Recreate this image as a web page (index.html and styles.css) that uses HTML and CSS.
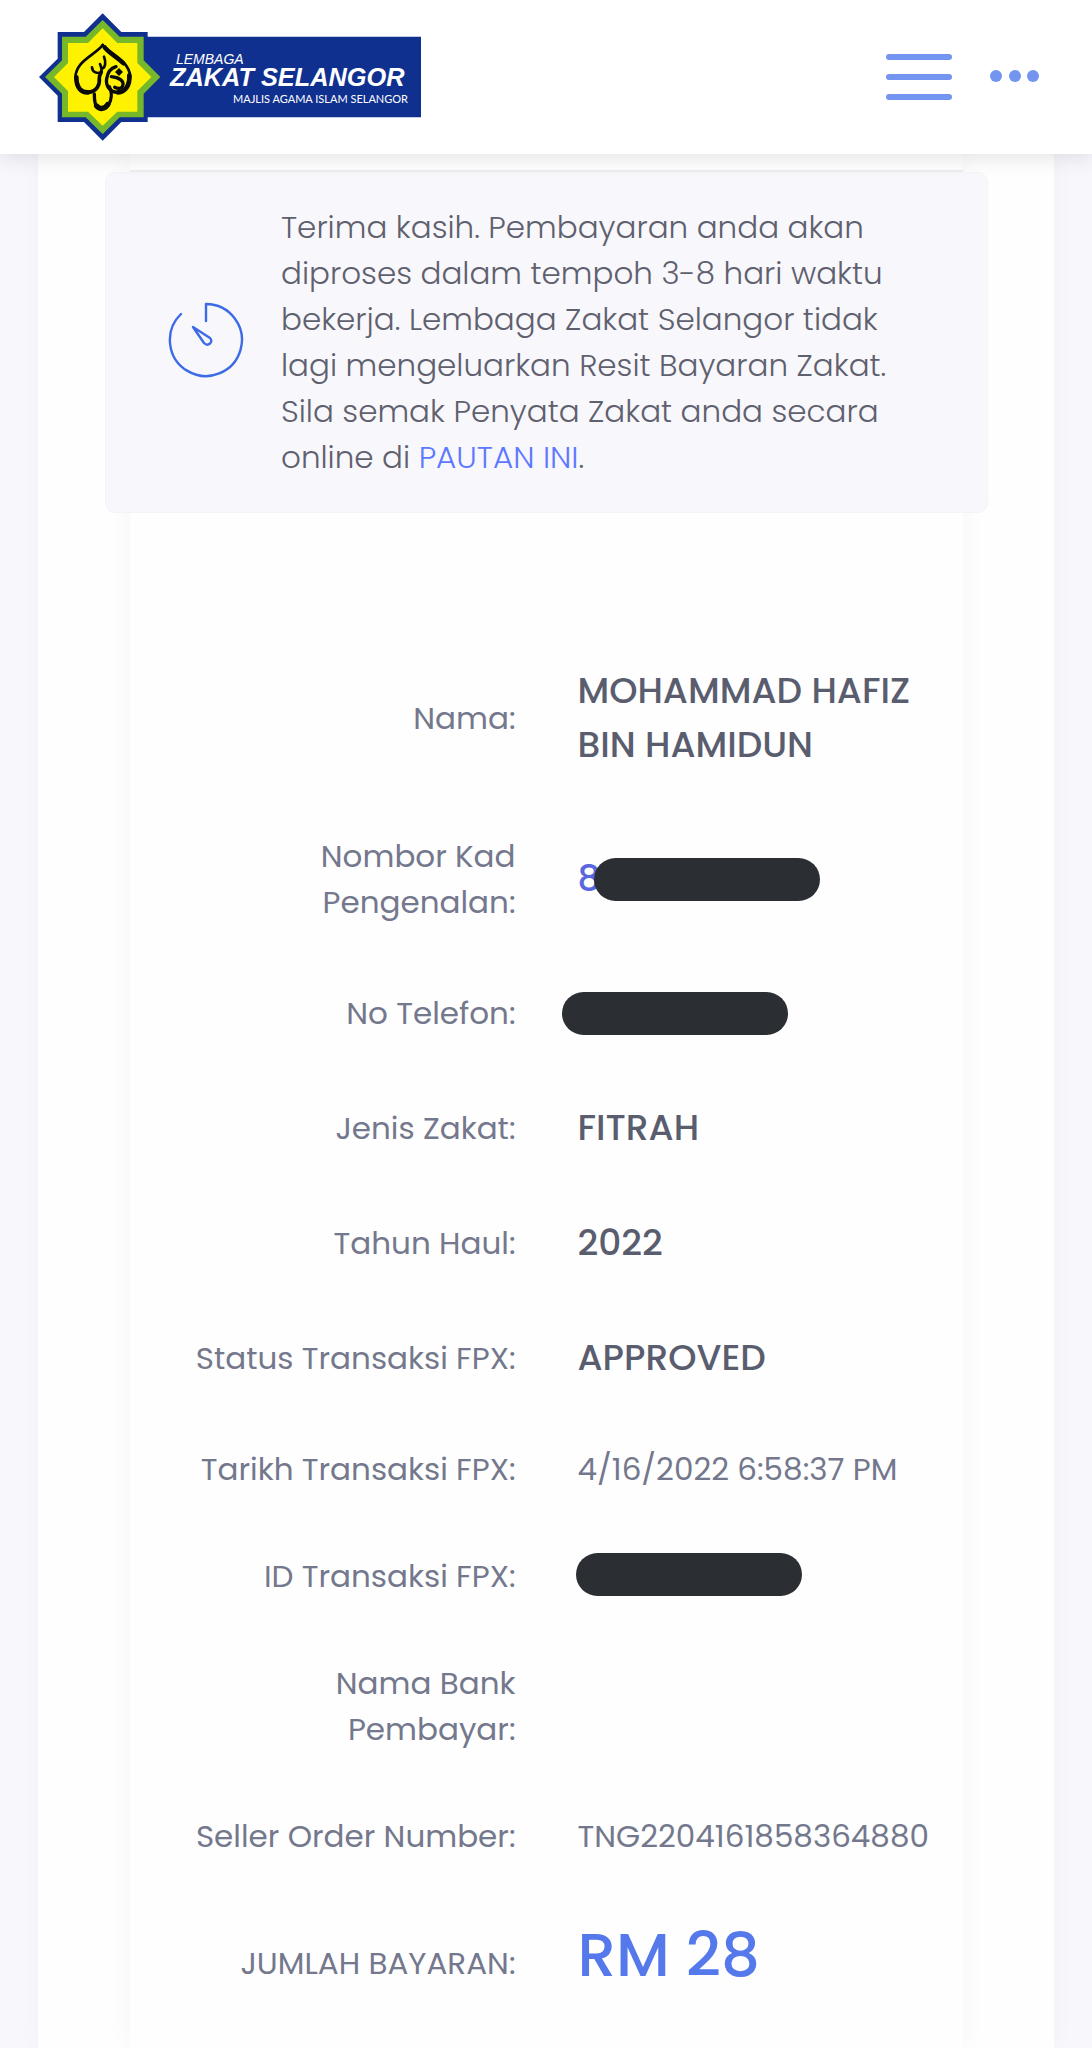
FILE: index.html
```html
<!DOCTYPE html>
<html lang="ms">
<head>
<meta charset="utf-8">
<meta name="viewport" content="width=device-width, initial-scale=1">
<title>Lembaga Zakat Selangor</title>
<link rel="stylesheet" href="styles.css">
</head>
<body>
<header class="topbar">
  <a class="brand" href="#" aria-label="Lembaga Zakat Selangor">
    <svg class="logo" viewBox="27 42 1146 382">
      <path fill="#10308f" d="M340 112H1173V354H340z"/>
      <path fill="#10308f" d="M218 42L274 98H353V178L391 233L353 289V368H274L218 424L162 368H83V289L27 233L83 178V98H162z"/>
      <path fill="#76b82a" d="M218 62L269 112H341V183L391 233L341 283V354H269L218 404L167 354H96V283L45 233L96 183V112H167z"/>
      <path fill="#fff200" d="M218 87L262 131H322V191L364 233L322 275V337H262L218 379L174 337H114V275L72 233L114 191V131H174z"/>
      <g transform="translate(120 120)" fill="none" stroke="#0a0a0a" stroke-linecap="round" stroke-linejoin="round">
        <path stroke-width="8" d="M98 17C78 46 16 64 16 116"/>
        <path stroke-width="14" d="M19 114C19 148 36 160 54 159"/>
        <path stroke-width="11" d="M54 159C80 157 90 138 88 116C88 108 92 104 94 97"/>
        <path stroke-width="8" d="M94 97C84 106 66 98 66 84M94 97C97 88 92 80 90 74M96 88C107 86 108 66 102 52"/>
        <path stroke-width="8" d="M98 17C110 38 180 62 181 114"/>
        <path stroke-width="13" d="M104 24C116 40 142 54 160 72"/>
        <path stroke-width="14" d="M178 108C180 138 166 158 144 159"/>
        <path stroke-width="10" d="M144 159C120 160 106 138 110 118C113 98 124 86 138 82"/>
        <path stroke-width="10" d="M124 112C146 114 164 124 158 140C154 150 142 148 134 144"/>
        <path stroke-width="10" d="M118 142C128 160 124 182 116 196M73 164C73 182 74 194 80 202"/>
        <path stroke-width="16" d="M80 200C90 211 104 210 113 196"/>
        <path fill="#0a0a0a" stroke="none" d="M147 86L159 98L147 110L135 98z"/>
      </g>
      <g fill="#fff">
        <text class="logo-small" x="438" y="195">LEMBAGA</text>
        <text class="logo-name" x="420" y="259">ZAKAT SELANGOR</text>
        <text class="logo-sub" x="1134" y="312" text-anchor="end">MAJLIS AGAMA ISLAM SELANGOR</text>
      </g>
    </svg>
  </a>
  <div class="actions">
    <button class="icon-button" type="button" aria-label="Menu">
      <svg width="66" height="48" viewBox="0 0 66 48" fill="#7395f0"><rect width="66" height="6" y="1" rx="3"/><rect width="66" height="6" y="21" rx="3"/><rect width="66" height="6" y="41" rx="3"/></svg>
    </button>
    <button class="icon-button" type="button" aria-label="Lagi">
      <svg width="50" height="14" viewBox="0 0 50 14" fill="#7395f0"><circle cx="6" cy="6" r="6"/><circle cx="25" cy="6" r="6"/><circle cx="43" cy="6" r="6"/></svg>
    </button>
  </div>
</header>
<main class="page">
  <section class="card">
    <div class="panel">
      <div class="rule"></div>
      <div class="alert" role="status">
        <svg class="alert-icon" width="76" height="80" viewBox="0 0 76 80" fill="none" stroke="#3d6be5" stroke-width="2.4" stroke-linecap="round" stroke-linejoin="round">
          <path d="M38 19V2A36 36 0 1 1 13 12"/>
          <path d="M25 25L42 36C46 40 40 45 36 41z"/>
        </svg>
        <p class="alert-text">Terima kasih. Pembayaran anda akan diproses dalam tempoh 3-8 hari waktu bekerja. Lembaga Zakat Selangor tidak lagi mengeluarkan Resit Bayaran Zakat. Sila semak Penyata Zakat anda secara online di <a href="#">PAUTAN INI</a>.</p>
      </div>
      <table class="receipt">
        <tr><th scope="row">Nama:</th><td class="strong">MOHAMMAD HAFIZ BIN HAMIDUN</td></tr>
        <tr><th scope="row">Nombor Kad Pengenalan:</th><td class="strong"><div class="masked"><a href="#">8</a><span class="mask mask-over"></span></div></td></tr>
        <tr><th scope="row">No Telefon:</th><td class="strong"><div class="masked"><span class="mask mask-out"></span></div></td></tr>
        <tr><th scope="row">Jenis Zakat:</th><td class="strong">FITRAH</td></tr>
        <tr><th scope="row">Tahun Haul:</th><td class="strong">2022</td></tr>
        <tr><th scope="row">Status Transaksi FPX:</th><td class="strong">APPROVED</td></tr>
        <tr><th scope="row">Tarikh Transaksi FPX:</th><td>4/16/2022 6:58:37 PM</td></tr>
        <tr><th scope="row">ID Transaksi FPX:</th><td><div class="masked masked-top"><span class="mask"></span></div></td></tr>
        <tr><th scope="row">Nama Bank Pembayar:</th><td></td></tr>
        <tr><th scope="row">Seller Order Number:</th><td>TNG2204161858364880</td></tr>
        <tr><th scope="row">JUMLAH BAYARAN:</th><td class="total">RM 28</td></tr>
      </table>
    </div>
  </section>
</main>
</body>
</html>
```
FILE: styles.css
```css
* { box-sizing: border-box; }

body {
  margin: 0;
  min-height: 100vh;
  display: flex;
  flex-direction: column;
  background: #f7f7fc;
  color: #74788d;
  font: 400 31px/46px Poppins, Inter, sans-serif;
}

a { color: #5d78ff; text-decoration: none; }

.topbar {
  position: sticky;
  top: 0;
  z-index: 2;
  height: 154px;
  padding: 0 52px 0 39px;
  display: flex;
  align-items: center;
  justify-content: space-between;
  background: #fff;
  box-shadow: 0 2px 20px rgba(60, 60, 80, .16);
}

.brand, .logo { display: block; }
.logo { width: 382px; height: 128px; }
.logo-small { font: italic 42px "Liberation Sans", sans-serif; }
.logo-name { font: italic bold 76px "Liberation Sans", sans-serif; }
.logo-sub { font: 33px Lato, "Liberation Sans", sans-serif; }

.actions { display: flex; align-items: center; gap: 38px; }
.icon-button { padding: 0; border: 0; background: none; cursor: pointer; }
.icon-button svg { display: block; }

.page {
  flex: 1;
  display: flex;
  padding: 0 38px;
}

.card {
  flex: 1;
  display: flex;
  padding: 0 91px 0 92px;
  background: #fefefe;
  box-shadow: 0 0 24px rgba(82, 63, 105, .03);
}

.panel {
  flex: 1;
  background: #fefefe;
  box-shadow: 0 0 24px rgba(82, 63, 105, .04);
}

.rule { height: 18px; border-bottom: 2px solid #ededf2; }

.alert {
  margin: 0 -25px 121px;
  padding: 31px 90px 32px 62px;
  display: flex;
  align-items: center;
  gap: 37px;
  border-radius: 10px;
  background: #f7f7fc;
  border: 1px solid #f3f3f8;
}

.alert-icon { flex: none; }
.alert-text { margin: 0; color: #5f606e; font-weight: 300; }

.receipt {
  width: 100%;
  table-layout: fixed;
  border-collapse: collapse;
}

.receipt th, .receipt td { padding: 30px 31px 31px; vertical-align: middle; }
.receipt th { padding-left: 40px; font-weight: 400; text-align: right; }
.receipt td { text-align: left; }
.receipt .strong { color: #595d6e; font-size: 36px; line-height: 54px; font-weight: 500; }
.receipt .total { padding-bottom: 47px; color: #5578eb; font-size: 61px; line-height: 70px; font-weight: 500; }

.masked { display: flex; align-items: center; min-height: 46px; }
.masked-top { align-items: flex-start; }
.strong .masked { min-height: 54px; }
.masked a { color: #5867dd; }
.mask {
  flex: none;
  width: 226px;
  height: 43px;
  margin-left: -2px;
  border-radius: 22px;
  background: #2b2f33;
}
.mask-over { margin-left: -6px; }
.mask-out { margin-left: -16px; }
```
